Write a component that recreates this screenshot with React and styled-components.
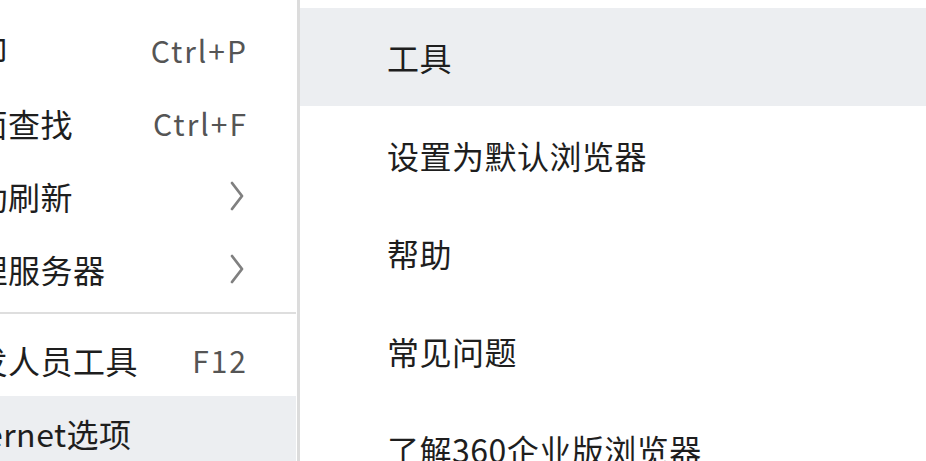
import React from "react";
import styled, { createGlobalStyle } from "styled-components";

const Global = createGlobalStyle`
  html, body {
    margin: 0;
    padding: 0;
    background: #ffffff;
    overflow: hidden;
  }
  body {
    font-family: "Noto Sans CJK SC", "Noto Sans", sans-serif;
  }
`;

const Page = styled.div`
  display: flex;
  width: 926px;
  height: 461px;
  overflow: hidden;
  background: #ffffff;
`;

const LeftMenu = styled.div`
  flex: 0 0 auto;
  width: 440px;
  margin-left: -144px;
  padding-top: 13px;
  display: flex;
  flex-direction: column;
  background: #ffffff;
  border-right: 1px solid #ffffff;
  box-shadow: 3px 0 0 #dcdcdc;
  margin-right: 3px;
`;

const LeftItem = styled.div`
  flex: 0 0 auto;
  height: 73px;
  display: flex;
  align-items: center;
  justify-content: space-between;
  padding: 0 50px 0 87px;
  background: ${(p) => (p.$active ? "#eceef1" : "transparent")};
  box-sizing: border-box;
`;

const Label = styled.span`
  font-size: 32px;
  color: #1e1e1e;
  letter-spacing: 0.5px;
  white-space: nowrap;
  line-height: 1;
`;

const Shortcut = styled.span`
  font-size: 30px;
  color: #555555;
  letter-spacing: 2px;
  margin-right: -2px;
  white-space: nowrap;
  line-height: 1;
`;

const Separator = styled.div`
  flex: 0 0 auto;
  height: 18px;
  display: flex;
  align-items: center;
  &::before {
    content: "";
    display: block;
    width: 100%;
    height: 2px;
    margin-top: -3px;
    background: #dedede;
  }
`;

const RightMenu = styled.div`
  flex: 1 1 auto;
  padding-top: 8px;
  display: flex;
  flex-direction: column;
  background: #ffffff;
`;

const RightItem = styled.div`
  flex: 0 0 auto;
  height: 98px;
  display: flex;
  align-items: center;
  padding-left: 87px;
  background: ${(p) => (p.$active ? "#eceef1" : "transparent")};
  box-sizing: border-box;
`;

const Chevron = () => (
  <svg width="16" height="30" viewBox="0 0 16 30" style={{ marginRight: 1 }}>
    <path d="M3 2 L13 15 L3 28" fill="none" stroke="#808080" strokeWidth="2.8" strokeLinecap="round" strokeLinejoin="round" />
  </svg>
);

const leftItems = [
  { label: "打印", right: "Ctrl+P" },
  { label: "页面查找", right: "Ctrl+F" },
  { label: "自动刷新", chevron: true },
  { label: "代理服务器", chevron: true },
  { sep: true },
  { label: "开发人员工具", right: "F12" },
  { label: "Internet选项", active: true },
];

const rightItems = [
  { label: "工具", active: true },
  { label: "设置为默认浏览器" },
  { label: "帮助" },
  { label: "常见问题" },
  { label: "了解360企业版浏览器" },
];

export default function App() {
  return (
    <>
      <Global />
      <Page>
        <LeftMenu>
          {leftItems.map((it, i) =>
            it.sep ? (
              <Separator key={i} />
            ) : (
              <LeftItem key={i} $active={it.active}>
                <Label>{it.label}</Label>
                {it.right && <Shortcut>{it.right}</Shortcut>}
                {it.chevron && <Chevron />}
              </LeftItem>
            )
          )}
        </LeftMenu>
        <RightMenu>
          {rightItems.map((it, i) => (
            <RightItem key={i} $active={it.active}>
              <Label>{it.label}</Label>
            </RightItem>
          ))}
        </RightMenu>
      </Page>
    </>
  );
}
